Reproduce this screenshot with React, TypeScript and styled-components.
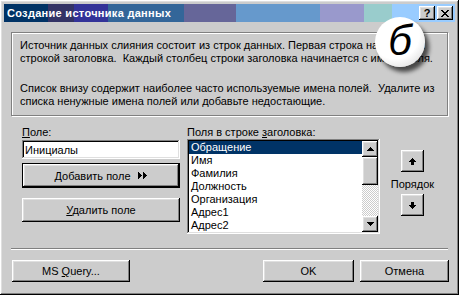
import React from 'react';
import styled, { createGlobalStyle } from 'styled-components';

const fields = [
  'Обращение',
  'Имя',
  'Фамилия',
  'Должность',
  'Организация',
  'Адрес1',
  'Адрес2',
];

const App: React.FC = () => {
  return (
    <>
      <GlobalStyle />
      <Window>
        <TitleBar>
          <Title>Создание источника данных</Title>
          <TitleButtons>
            <CaptionBtn>?</CaptionBtn>
            <CaptionBtn $gap>
              <svg width="8" height="7" viewBox="0 0 8 7" shapeRendering="crispEdges">
                <path d="M0 0h2v1h1v1h2V1h1V0h2v1H7v1H6v1H5v1h1v1h1v1h1v1H6V6H5V5H3v1H2v1H0V6h1V5h1V4h1V3H2V2H1V1H0z" fill="#000" />
              </svg>
            </CaptionBtn>
          </TitleButtons>
        </TitleBar>

        <InfoGroup>
          <Para>
            Источник данных слияния состоит из строк данных. Первая строка называется
            <br />
            строкой заголовка.&nbsp; Каждый столбец строки заголовка начинается с имени поля.
          </Para>
          <Para $gap>
            Список внизу содержит наиболее часто используемые имена полей.&nbsp; Удалите из
            <br />
            списка ненужные имена полей или добавьте недостающие.
          </Para>
        </InfoGroup>

        <MainRow>
          <LeftCol>
            <Label>
              <U>П</U>оле:
            </Label>
            <TextField defaultValue="Инициалы" />
            <Button $h={25} $default $mt={4}>
              <BtnText>
                <U>Д</U>обавить поле
              </BtnText>
              <svg width="10" height="7" viewBox="0 0 10 7" shapeRendering="crispEdges" style={{ marginLeft: 7 }}>
                <path d="M0 0L4 3.5L0 7zM5 0L9 3.5L5 7z" fill="#000" />
              </svg>
            </Button>
            <Button $h={24} $mt={10}>
              <BtnText>
                <U>У</U>далить поле
              </BtnText>
            </Button>
          </LeftCol>

          <MiddleCol>
            <Label>
              Поля в строке <U>з</U>аголовка:
            </Label>
            <ListBox>
              <Rows>
                {fields.map((f, i) => (
                  <Row key={f} $selected={i === 0}>
                    {f}
                  </Row>
                ))}
              </Rows>
              <ScrollBar>
                <ScrollBtn>
                  <svg width="7" height="4" viewBox="0 0 7 4" shapeRendering="crispEdges">
                    <path d="M3 0h1v1h1v1h1v1h1v1H0V3h1V2h1V1h1z" fill="#000" />
                  </svg>
                </ScrollBtn>
                <Thumb />
                <Track />
                <ScrollBtn>
                  <svg width="7" height="4" viewBox="0 0 7 4" shapeRendering="crispEdges">
                    <path d="M0 0h7v1H6v1H5v1H4v1H3V3H2V2H1V1H0z" fill="#000" />
                  </svg>
                </ScrollBtn>
              </ScrollBar>
            </ListBox>
          </MiddleCol>

          <OrderCol>
            <OrderBtn>
              <svg width="7" height="7" viewBox="0 0 7 7" shapeRendering="crispEdges">
                <path d="M3 0h1v1h1v1h1v1h1v1H5v3H2V4H0V3h1V2h1V1h1z" fill="#000" />
              </svg>
            </OrderBtn>
            <OrderLabel>Порядок</OrderLabel>
            <OrderBtn>
              <svg width="7" height="7" viewBox="0 0 7 7" shapeRendering="crispEdges">
                <path d="M2 0h3v3h2v1H6v1H5v1H4v1H3V6H2V5H1V4H0V3h2z" fill="#000" />
              </svg>
            </OrderBtn>
          </OrderCol>
        </MainRow>

        <Separator />

        <Footer>
          <Button $w={118} $h={22}>
            <BtnText>
              MS <U>Q</U>uery...
            </BtnText>
          </Button>
          <FooterRight>
            <Button $w={91} $h={22}>
              <BtnText>OK</BtnText>
            </Button>
            <Button $w={89} $h={22}>
              <BtnText>Отмена</BtnText>
            </Button>
          </FooterRight>
        </Footer>

        <Badge>б</Badge>
      </Window>
    </>
  );
};

export default App;

const GlobalStyle = createGlobalStyle`
  html, body {
    margin: 0;
    padding: 0;
    background: #cccccc;
  }
  body {
    font-family: "Liberation Sans", Arial, sans-serif;
    font-size: 11px;
    color: #000;
  }
`;

const raised = `
  box-shadow: inset -1px -1px #000, inset 1px 1px #fff, inset -2px -2px #808080, inset 2px 2px #dfdfdf;
`;

const Window = styled.div`
  position: relative;
  box-sizing: border-box;
  width: 459px;
  height: 295px;
  padding: 4px;
  background: #cccccc;
  ${raised}
  overflow: hidden;
`;

const TitleBar = styled.div`
  display: flex;
  align-items: center;
  justify-content: space-between;
  height: 18px;
  padding: 0 2px 0 3px;
  background: linear-gradient(
    to right,
    #003366 0 44px,
    #333366 44px 70px,
    #333399 70px 104px,
    #336699 104px 180px,
    #666699 180px 232px,
    #6699cc 232px 316px,
    #9999cc 316px 360px,
    #99cccc 360px 388px,
    #99ccff 388px
  );
`;

const Title = styled.div`
  color: #fff;
  font-weight: bold;
  font-size: 11px;
  letter-spacing: 0.3px;
  line-height: 18px;
  white-space: nowrap;
`;

const TitleButtons = styled.div`
  display: flex;
  align-items: center;
`;

const CaptionBtn = styled.div<{ $gap?: boolean }>`
  display: flex;
  align-items: center;
  justify-content: center;
  width: 16px;
  height: 14px;
  margin-left: ${(p) => (p.$gap ? '2px' : '0')};
  background: #cccccc;
  font-weight: bold;
  font-size: 11px;
  line-height: 14px;
  ${raised}
`;

const InfoGroup = styled.div`
  margin: 10px 7px 0 7px;
  padding: 6px 8px 7px 8px;
  border: 1px solid #808080;
  box-shadow: inset 1px 1px #fff, 1px 1px #fff;
`;

const Para = styled.p<{ $gap?: boolean }>`
  margin: ${(p) => (p.$gap ? '17px' : '0')} 0 0 0;
  line-height: 13px;
  white-space: nowrap;
  overflow: hidden;
`;

const U = styled.span`
  text-decoration: underline;
`;

const MainRow = styled.div`
  display: flex;
  margin-top: 10px;
  padding-left: 18px;
`;

const LeftCol = styled.div`
  display: flex;
  flex-direction: column;
  width: 158px;
`;

const Label = styled.div`
  height: 13px;
  line-height: 13px;
  white-space: nowrap;
`;

const TextField = styled.input`
  box-sizing: border-box;
  width: 158px;
  height: 19px;
  margin-top: 1px;
  padding: 0 3px;
  border: none;
  outline: none;
  background: #fff;
  font: 11px "Liberation Sans", Arial, sans-serif;
  box-shadow: inset -1px -1px #fff, inset 1px 1px #808080, inset -2px -2px #dfdfdf, inset 2px 2px #000;
`;

const Button = styled.button<{ $w?: number; $h: number; $default?: boolean; $mt?: number }>`
  display: flex;
  align-items: center;
  justify-content: center;
  box-sizing: border-box;
  width: ${(p) => (p.$w ? `${p.$w}px` : '100%')};
  height: ${(p) => p.$h}px;
  margin-top: ${(p) => p.$mt ?? 0}px;
  padding: 0;
  background: #cccccc;
  font: 11px "Liberation Sans", Arial, sans-serif;
  color: #000;
  border: ${(p) => (p.$default ? '1px solid #000' : 'none')};
  ${raised}
`;

const BtnText = styled.span`
  white-space: pre;
`;

const MiddleCol = styled.div`
  display: flex;
  flex-direction: column;
  width: 193px;
  margin-left: 7px;
`;

const ListBox = styled.div`
  display: flex;
  box-sizing: border-box;
  height: 95px;
  padding: 2px;
  background: #fff;
  box-shadow: inset -1px -1px #fff, inset 1px 1px #808080, inset -2px -2px #dfdfdf, inset 2px 2px #000;
`;

const Rows = styled.div`
  flex: 1;
`;

const Row = styled.div<{ $selected?: boolean }>`
  height: 13px;
  line-height: 13px;
  padding-left: 2px;
  background: ${(p) => (p.$selected ? '#003366' : 'transparent')};
  color: ${(p) => (p.$selected ? '#fff' : '#000')};
`;

const ScrollBar = styled.div`
  display: flex;
  flex-direction: column;
  width: 16px;
`;

const ScrollBtn = styled.div`
  display: flex;
  align-items: center;
  justify-content: center;
  width: 16px;
  height: 16px;
  background: #cccccc;
  ${raised}
`;

const Thumb = styled.div`
  height: 28px;
  background: #cccccc;
  ${raised}
`;

const Track = styled.div`
  flex: 1;
  background: repeating-conic-gradient(#cccccc 0 25%, #ffffff 0 50%) 0 0 / 2px 2px;
`;

const OrderCol = styled.div`
  display: flex;
  flex-direction: column;
  align-items: center;
  width: 43px;
  margin-left: 11px;
  padding-top: 24px;
`;

const OrderBtn = styled.div`
  display: flex;
  align-items: center;
  justify-content: center;
  width: 23px;
  height: 22px;
  background: #cccccc;
  ${raised}
`;

const OrderLabel = styled.div`
  height: 13px;
  line-height: 13px;
  margin: 6px 0 3px;
  white-space: nowrap;
`;

const Separator = styled.div`
  height: 0;
  margin: 14px 7px 0 7px;
  border-top: 1px solid #808080;
  border-bottom: 1px solid #fff;
`;

const Footer = styled.div`
  display: flex;
  justify-content: space-between;
  margin-top: 10px;
  padding: 0 6px 0 8px;
`;

const FooterRight = styled.div`
  display: flex;
  gap: 6px;
`;

const Badge = styled.div`
  position: absolute;
  left: 375px;
  top: 17px;
  width: 50px;
  height: 50px;
  border-radius: 50%;
  display: flex;
  align-items: center;
  justify-content: center;
  background: radial-gradient(circle at 40% 35%, #ffffff 55%, #e4e4e4 80%, #9a9a9a 100%);
  box-shadow: 4px 5px 4px rgba(0, 0, 0, 0.65);
  font-family: "Liberation Sans", Arial, sans-serif;
  font-style: italic;
  font-size: 42px;
  line-height: 1;
  color: #000;
  padding-bottom: 2px;
  box-sizing: border-box;
`;
